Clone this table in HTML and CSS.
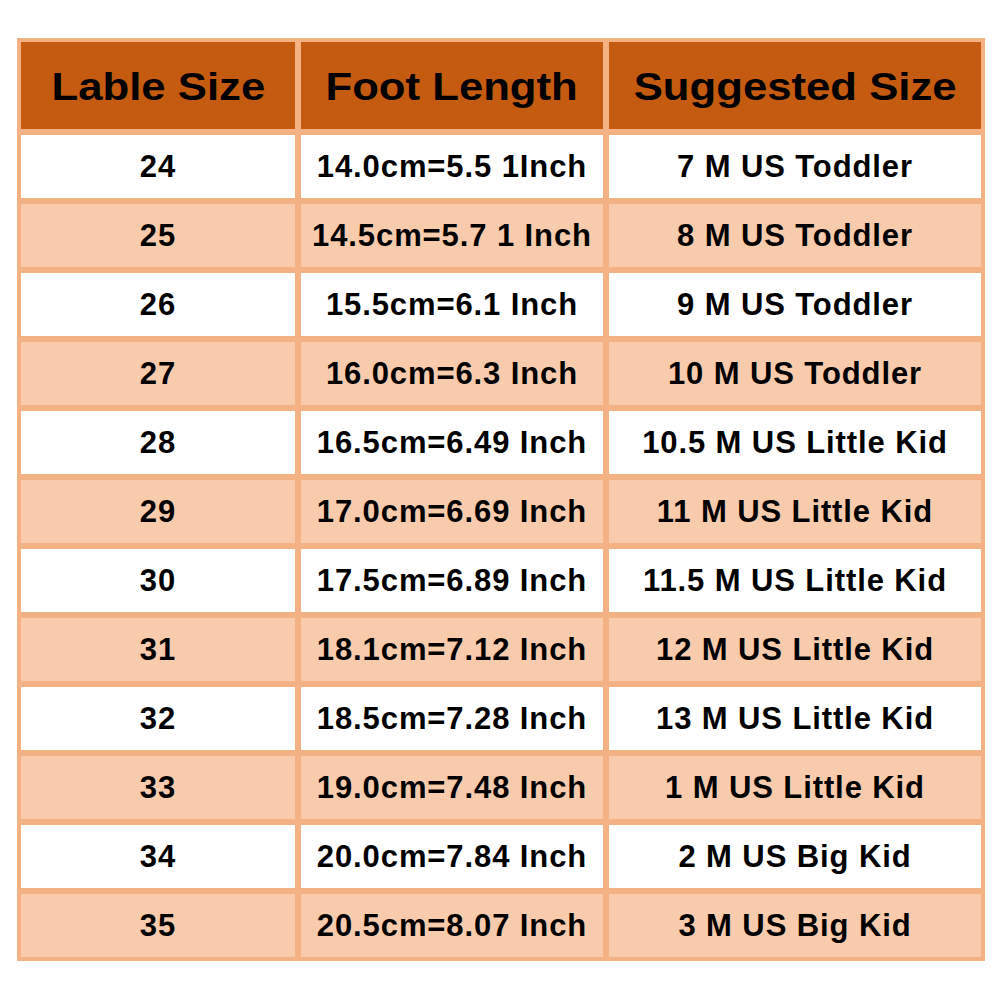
FILE: index.html
```html
<!DOCTYPE html>
<html>
<head>
<meta charset="utf-8">
<link rel="stylesheet" href="styles.css">
</head>
<body>
<div class="page">
  <div class="chart">
    <div class="cell head"><span class="h">Lable Size</span></div>
    <div class="cell head"><span class="h">Foot Length</span></div>
    <div class="cell head"><span class="h">Suggested Size</span></div>

    <div class="cell">24</div><div class="cell">14.0cm=5.5 1Inch</div><div class="cell">7 M US Toddler</div>
    <div class="cell alt">25</div><div class="cell alt">14.5cm=5.7 1 Inch</div><div class="cell alt">8 M US Toddler</div>
    <div class="cell">26</div><div class="cell">15.5cm=6.1 Inch</div><div class="cell">9 M US Toddler</div>
    <div class="cell alt">27</div><div class="cell alt">16.0cm=6.3 Inch</div><div class="cell alt">10 M US Toddler</div>
    <div class="cell">28</div><div class="cell">16.5cm=6.49 Inch</div><div class="cell">10.5 M US Little Kid</div>
    <div class="cell alt">29</div><div class="cell alt">17.0cm=6.69 Inch</div><div class="cell alt">11 M US Little Kid</div>
    <div class="cell">30</div><div class="cell">17.5cm=6.89 Inch</div><div class="cell">11.5 M US Little Kid</div>
    <div class="cell alt">31</div><div class="cell alt">18.1cm=7.12 Inch</div><div class="cell alt">12 M US Little Kid</div>
    <div class="cell">32</div><div class="cell">18.5cm=7.28 Inch</div><div class="cell">13 M US Little Kid</div>
    <div class="cell alt">33</div><div class="cell alt">19.0cm=7.48 Inch</div><div class="cell alt">1 M US Little Kid</div>
    <div class="cell">34</div><div class="cell">20.0cm=7.84 Inch</div><div class="cell">2 M US Big Kid</div>
    <div class="cell alt">35</div><div class="cell alt">20.5cm=8.07 Inch</div><div class="cell alt">3 M US Big Kid</div>
  </div>
</div>
</body>
</html>
```
FILE: styles.css
```css
html, body {
  margin: 0;
  padding: 0;
  background: #ffffff;
}
.page {
  width: 1001px;
  height: 1001px;
  padding: 38px 0 0 17px;
  box-sizing: border-box;
}
.chart {
  display: grid;
  grid-template-columns: 274px 302px 372px;
  grid-template-rows: 87px repeat(12, 63px);
  gap: 6px;
  width: max-content;
  border: 4px solid #f4b183;
  background: #f4b183;
  font-family: "Liberation Sans", Arial, sans-serif;
  font-weight: bold;
  color: #000;
}
.cell {
  background: #ffffff;
  display: flex;
  align-items: center;
  justify-content: center;
  font-size: 31px;
  letter-spacing: 0.9px;
  white-space: nowrap;
}
.cell.alt {
  background: #f8cbad;
}
.cell.head {
  background: #c55a11;
}
.h {
  display: inline-block;
  font-size: 39px;
  letter-spacing: 0;
  padding-top: 2px;
  transform: scaleX(1.12);
}
```
